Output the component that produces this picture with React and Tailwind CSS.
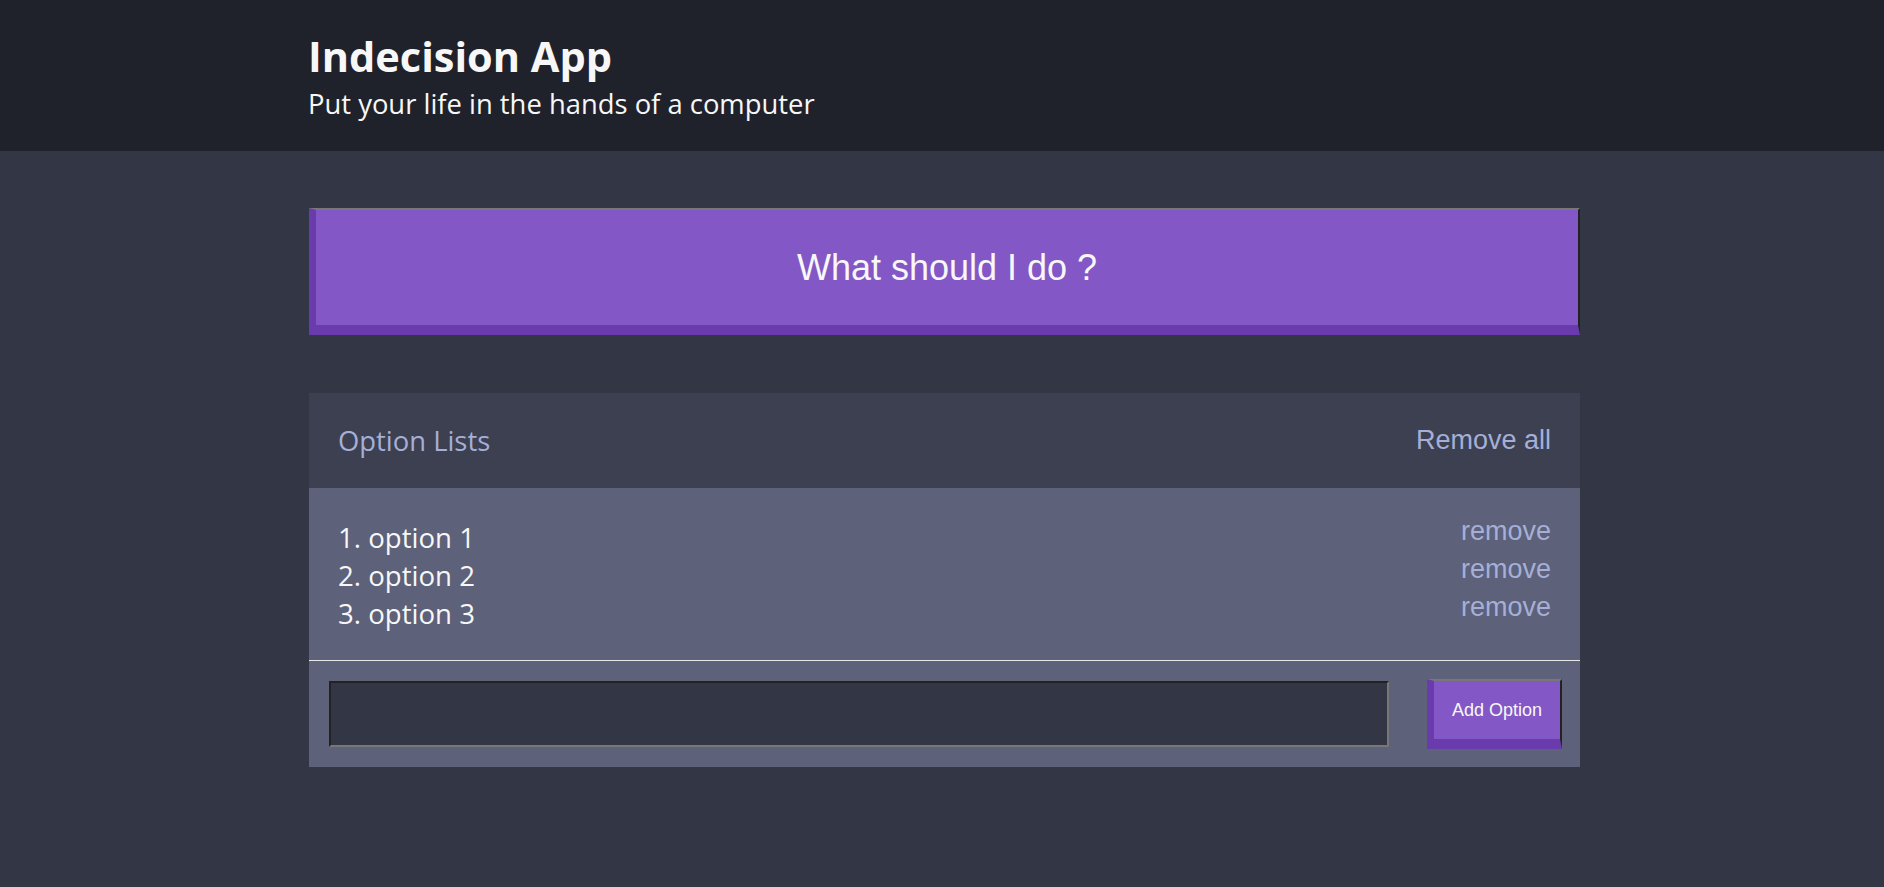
import React, { useState } from 'react';

const sans = "font-['Open_Sans',sans-serif]";
const arial = "font-['Liberation_Sans',Arial,sans-serif]";

export default function App() {
  const [options] = useState(['option 1', 'option 2', 'option 3']);
  const [value, setValue] = useState('');

  return (
    <div className={`min-h-screen bg-[#333745] ${sans}`}>
      {/* Header */}
      <header className="bg-[#20222b] h-[151px]">
        <div className="mx-auto w-[1276px] pl-[4px] pt-[27px] text-[#f7f7f7]">
          <h1 className="text-[41.5px] leading-[58px] font-bold">Indecision App</h1>
          <h2 className="text-[27.4px] leading-[38px] font-normal">Put your life in the hands of a computer</h2>
        </div>
      </header>

      <main className="mx-auto w-[1276px] pl-[5px] pt-[57px]">
        {/* Big action button */}
        <button
          className={`w-full h-[127px] bg-[#8357c5] text-[#f7f7f7] text-[36px] ${arial} border-t-2 border-l-[7px] border-b-[10px] border-r-2 border-t-[#777] border-l-[#6a3bad] border-b-[#6a3bad] border-r-[#222]`}
        >
          What should I do ?
        </button>

        {/* Widget */}
        <div className="mt-[58px] bg-[#5d6179]">
          <div className="h-[95px] bg-[#3c4051] flex items-center justify-between px-[29px]">
            <h3 className="text-[27.4px] text-[#a5afd7] font-normal">Option Lists</h3>
            <button className={`text-[27px] text-[#a5afd7] ${arial}`}>Remove all</button>
          </div>

          <div className="pt-[30px] pb-[28px] px-[29px] border-b border-[#e8e8e8]">
            {options.map((opt, i) => (
              <div key={opt} className="h-[38px] flex items-start justify-between">
                <p className="text-[27.6px] leading-[38px] text-[#f7f7f7]">{i + 1}. {opt}</p>
                <button className={`text-[27px] leading-[26px] text-[#a5afd7] ${arial}`}>remove</button>
              </div>
            ))}
          </div>

          <form
            className="h-[106px] flex items-center pl-[20px] pr-[18px] gap-[38px]"
            onSubmit={(e) => e.preventDefault()}
          >
            <input
              className="flex-1 h-[66px] bg-[#333645] text-[#f7f7f7] px-3 outline-none border-2 border-t-[#222] border-l-[#222] border-b-[#777] border-r-[#777]"
              value={value}
              onChange={(e) => setValue(e.target.value)}
            />
            <button
              type="submit"
              className={`w-[135px] h-[70px] bg-[#8357c5] text-[#f7f7f7] text-[18px] ${arial} border-t-2 border-l-[7px] border-b-[10px] border-r-2 border-t-[#777] border-l-[#6a3bad] border-b-[#6a3bad] border-r-[#222]`}
            >
              Add Option
            </button>
          </form>
        </div>
      </main>
    </div>
  );
}
